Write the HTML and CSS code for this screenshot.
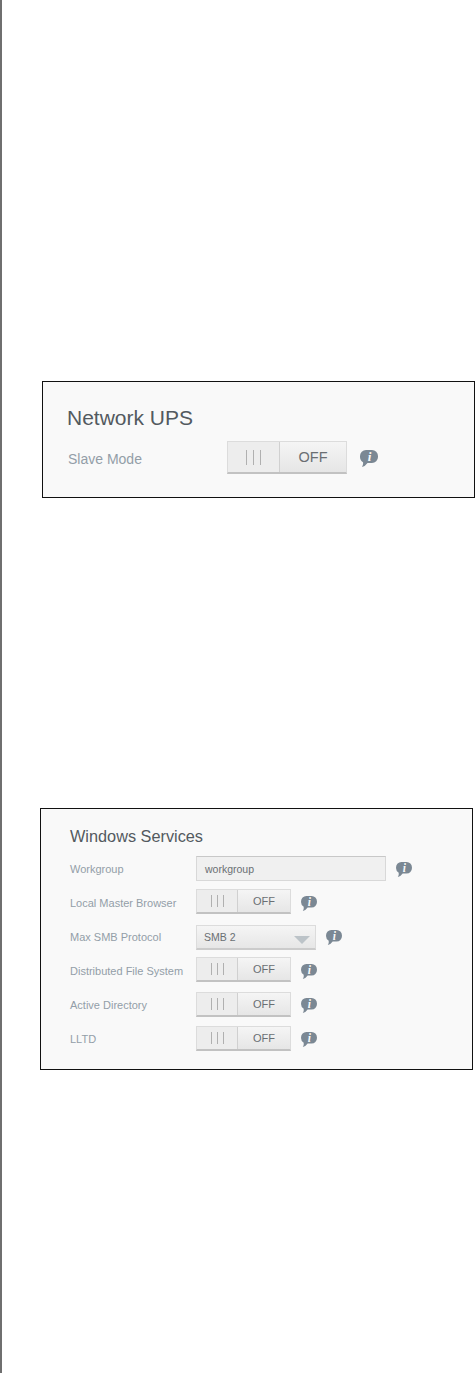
FILE: index.html
```html
<!DOCTYPE html>
<html lang="en">
  <head>
    <meta charset="UTF-8" />
    <title>Settings</title>
    <link rel="stylesheet" href="styles.css">
  </head>
  <body>
    <div class="page">
      <div class="panel panel-ups">
        <h2>Network UPS</h2>
        <div class="row">
          <span class="label">Slave Mode</span>
          <div class="toggle">
            <span class="grip"><i></i><i></i><i></i></span>
            <span class="state">OFF</span>
          </div>
          <svg class="info" viewBox="0 0 18 17"><path d="M6 0h6a6 6 0 0 1 6 6v1a6 6 0 0 1-6 6H7.500Q5.500 16 2 17Q3.500 14.500 3 12.200A6 6 0 0 1 0 7V6a6 6 0 0 1 6-6z"/><text x="9.500" y="11">i</text></svg>
        </div>
      </div>

      <div class="panel panel-win">
        <h3>Windows Services</h3>
        <div class="row">
          <span class="label">Workgroup</span>
          <div class="field">workgroup</div>
          <svg class="info" viewBox="0 0 18 17"><path d="M6 0h6a6 6 0 0 1 6 6v1a6 6 0 0 1-6 6H7.500Q5.500 16 2 17Q3.500 14.500 3 12.200A6 6 0 0 1 0 7V6a6 6 0 0 1 6-6z"/><text x="9.500" y="11">i</text></svg>
        </div>
        <div class="row row-up">
          <span class="label">Local Master Browser</span>
          <div class="toggle">
            <span class="grip"><i></i><i></i><i></i></span>
            <span class="state">OFF</span>
          </div>
          <svg class="info" viewBox="0 0 18 17"><path d="M6 0h6a6 6 0 0 1 6 6v1a6 6 0 0 1-6 6H7.500Q5.500 16 2 17Q3.500 14.500 3 12.200A6 6 0 0 1 0 7V6a6 6 0 0 1 6-6z"/><text x="9.500" y="11">i</text></svg>
        </div>
        <div class="row row-down">
          <span class="label">Max SMB Protocol</span>
          <div class="select">SMB 2<span class="arrow"></span></div>
          <svg class="info" viewBox="0 0 18 17"><path d="M6 0h6a6 6 0 0 1 6 6v1a6 6 0 0 1-6 6H7.500Q5.500 16 2 17Q3.500 14.500 3 12.200A6 6 0 0 1 0 7V6a6 6 0 0 1 6-6z"/><text x="9.500" y="11">i</text></svg>
        </div>
        <div class="row row-up">
          <span class="label">Distributed File System</span>
          <div class="toggle">
            <span class="grip"><i></i><i></i><i></i></span>
            <span class="state">OFF</span>
          </div>
          <svg class="info" viewBox="0 0 18 17"><path d="M6 0h6a6 6 0 0 1 6 6v1a6 6 0 0 1-6 6H7.500Q5.500 16 2 17Q3.500 14.500 3 12.200A6 6 0 0 1 0 7V6a6 6 0 0 1 6-6z"/><text x="9.500" y="11">i</text></svg>
        </div>
        <div class="row">
          <span class="label">Active Directory</span>
          <div class="toggle">
            <span class="grip"><i></i><i></i><i></i></span>
            <span class="state">OFF</span>
          </div>
          <svg class="info" viewBox="0 0 18 17"><path d="M6 0h6a6 6 0 0 1 6 6v1a6 6 0 0 1-6 6H7.500Q5.500 16 2 17Q3.500 14.500 3 12.200A6 6 0 0 1 0 7V6a6 6 0 0 1 6-6z"/><text x="9.500" y="11">i</text></svg>
        </div>
        <div class="row">
          <span class="label">LLTD</span>
          <div class="toggle">
            <span class="grip"><i></i><i></i><i></i></span>
            <span class="state">OFF</span>
          </div>
          <svg class="info" viewBox="0 0 18 17"><path d="M6 0h6a6 6 0 0 1 6 6v1a6 6 0 0 1-6 6H7.500Q5.500 16 2 17Q3.500 14.500 3 12.200A6 6 0 0 1 0 7V6a6 6 0 0 1 6-6z"/><text x="9.500" y="11">i</text></svg>
        </div>
      </div>
    </div>
  </body>
</html>
```

FILE: styles.css
```css
* {
  margin: 0;
  padding: 0;
  box-sizing: border-box;
  font-family: "Liberation Sans", Arial, sans-serif;
}

body {
  background: #fff;
  overflow: hidden;
}

.page {
  height: 1373px;
  border-left: 2px solid #6f6f6f;
  padding-top: 381px;
}

.panel {
  background: #f9f9f9;
  border: 1px solid #111;
}

.panel-ups {
  width: 433px;
  height: 117px;
  margin-left: 40px;
  padding: 24px 0 0 24px;
}

.panel-win {
  width: 433px;
  height: 262px;
  margin-left: 38px;
  margin-top: 310px;
  padding: 17px 0 0 29px;
}

h2 {
  font-size: 21px;
  font-weight: normal;
  line-height: 24px;
  color: #535a5f;
}

h3 {
  font-size: 16.300px;
  font-weight: normal;
  line-height: 20px;
  margin-bottom: 10px;
  color: #535a5f;
}

.row {
  display: flex;
  align-items: center;
}

.label {
  color: #939ea8;
}

/* switch */
.toggle {
  display: flex;
  background: #eee;
  border: 1px solid #dcdcdc;
  border-bottom: 2px solid #c2c2c2;
}

.grip {
  display: flex;
  align-items: center;
  justify-content: center;
  border-right: 1px solid #d0d0d0;
  background: #ededed;
}

.grip i {
  display: block;
  width: 1px;
  background: #b0b0b0;
}

.state {
  flex: 1;
  text-align: center;
  color: #6a6f73;
  background: linear-gradient(#f5f5f5, #e6e6e6);
}

.info {
  display: block;
  fill: #7b8894;
}

.info text {
  fill: #f9f9f9;
  font-family: "Liberation Serif", serif;
  font-size: 13px;
  font-style: italic;
  font-weight: bold;
  text-anchor: middle;
}

/* first panel sizes */
.panel-ups .row {
  margin-top: 11px;
}

.panel-ups .label {
  width: 160px;
  font-size: 14px;
  margin: 2px 0 0 1px;
}

.panel-ups .toggle {
  width: 120px;
  height: 33px;
  margin-left: -1px;
}

.panel-ups .grip {
  width: 52px;
  gap: 6px;
}

.panel-ups .grip i {
  height: 15px;
}

.panel-ups .state {
  font-size: 14.500px;
  line-height: 30px;
}

.panel-ups .info {
  width: 18px;
  height: 17px;
  margin-left: 13px;
  margin-top: 2px;
}

/* second panel sizes */
.panel-win .row {
  height: 34px;
  padding-bottom: 9px;
}

.panel-win .label {
  width: 126px;
  font-size: 11px;
}

.panel-win .toggle {
  width: 95px;
  height: 25px;
}

.panel-win .grip {
  width: 41px;
  gap: 5px;
}

.panel-win .grip i {
  height: 12px;
}

.panel-win .state {
  font-size: 11px;
  line-height: 22px;
}

.panel-win .info {
  width: 16px;
  height: 15px;
  margin-left: 10px;
  margin-top: 2px;
}

/* rows in the source sit a pixel off the even spacing */
.row-up .toggle {
  margin-top: -2px;
}

.row-down .select {
  margin-top: 2px;
}

.field {
  width: 190px;
  height: 25px;
  padding-left: 8px;
  font-size: 10.500px;
  line-height: 24px;
  color: #6a6f73;
  background: #f0f0f0;
  border: 1px solid #d8d8d8;
  border-top-color: #c8c8c8;
}

.select {
  position: relative;
  width: 120px;
  height: 25px;
  padding-left: 7px;
  font-size: 10.500px;
  line-height: 23px;
  color: #6a6f73;
  background: linear-gradient(#f5f5f5, #e6e6e6);
  border: 1px solid #dcdcdc;
  border-bottom: 2px solid #cbcbcb;
}

.arrow {
  position: absolute;
  right: 5px;
  top: 10px;
  border-left: 8px solid transparent;
  border-right: 8px solid transparent;
  border-top: 8px solid #bcc3c8;
}
```
